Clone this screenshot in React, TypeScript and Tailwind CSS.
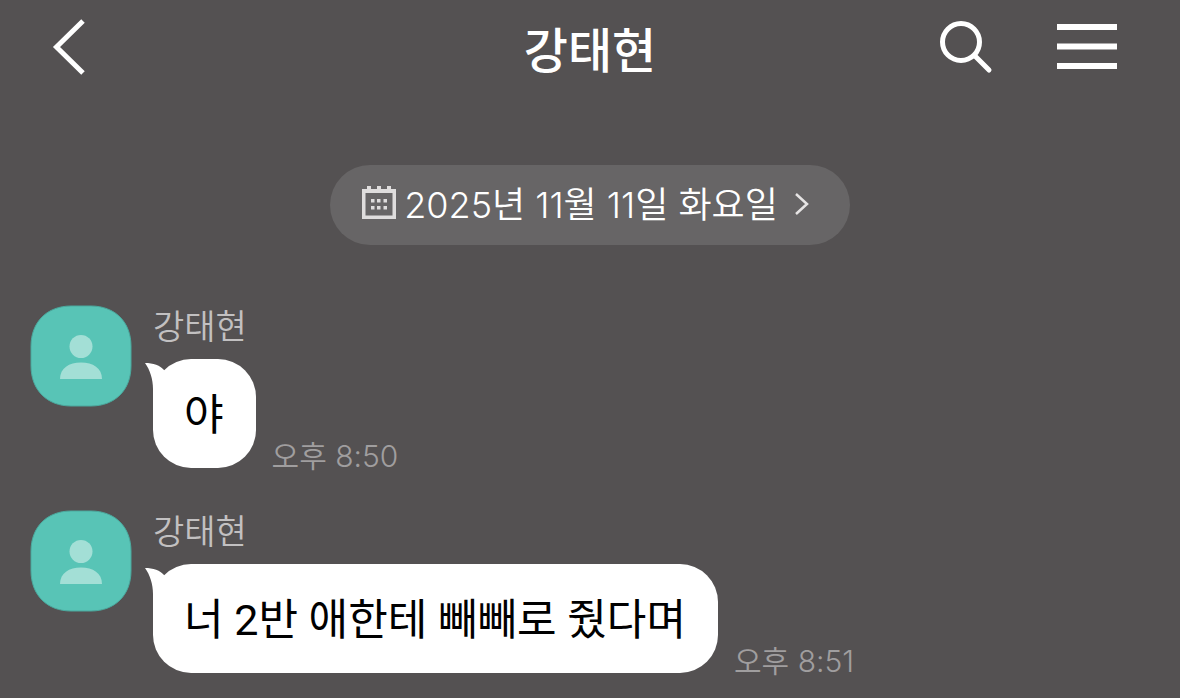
interface Message {
  id: number;
  sender: string;
  text: string;
  time: string;
}

const messages: Message[] = [
  { id: 1, sender: '강태현', text: '야', time: '오후 8:50' },
  { id: 2, sender: '강태현', text: '너 2반 애한테 빼빼로 줬다며', time: '오후 8:51' },
];

const ChatHeader = () => {
  return (
    <header className="grid grid-cols-[1fr_auto_1fr] items-center h-[94px] px-[52px]">
      <button type="button" aria-label="뒤로" className="justify-self-start">
        <svg width="34" height="56" viewBox="0 0 34 56" fill="none" stroke="#fff" strokeWidth="5">
          <path d="M31 2 L4.5 28 L31 54" />
        </svg>
      </button>

      <h1 className="pt-2 text-5xl font-medium text-white">강태현</h1>

      <div className="flex items-center justify-self-end gap-16 pr-[11px]">
        <button type="button" aria-label="검색">
          <svg width="54" height="54" viewBox="0 0 54 54" fill="none" stroke="#fff">
            <circle cx="22" cy="22" r="18.5" strokeWidth="5" />
            <path d="M35.5 35.5 L50 50" strokeWidth="5" strokeLinecap="round" />
          </svg>
        </button>
        <button type="button" aria-label="메뉴">
          <svg width="60" height="46" viewBox="0 0 60 46" fill="#fff">
            <rect y="0" width="60" height="6" />
            <rect y="19.5" width="60" height="6" />
            <rect y="39" width="60" height="6" />
          </svg>
        </button>
      </div>
    </header>
  );
};

const CalendarIcon = () => (
  <svg className="mb-1" width="34" height="34" viewBox="0 0 34 34" fill="#dfdddd" aria-hidden="true">
    <path fillRule="evenodd" d="M0 3H34V33H0Z M3.5 7V29.5H30.5V7Z" />
    <path d="M5 0H9V4H5Z M15 0H19V4H15Z M25 0H29V4H25Z" />
    <path d="M9 13H12.5V16.5H9Z M15 13H18.5V16.5H15Z M21.5 13H25V16.5H21.5Z" />
    <path d="M9 20H12.5V23.5H9Z M15 20H18.5V23.5H15Z M21.5 20H25V23.5H21.5Z" />
  </svg>
);

const DateDivider = () => {
  return (
    <div className="flex justify-center mt-[71px]">
      <button
        type="button"
        className="flex items-center h-20 pl-8 pr-10 rounded-full bg-[#676566] text-4xl font-[360] text-white"
      >
        <CalendarIcon />
        <span className="ml-2">2025년 11월 11일 화요일</span>
        <svg className="ml-4" width="16" height="24" viewBox="0 0 16 24" fill="none" stroke="#e6e4e4" strokeWidth="2.5" aria-hidden="true">
          <path d="M2 1 L13 11 L2 21" />
        </svg>
      </button>
    </div>
  );
};

const Avatar = () => (
  <svg className="shrink-0" width="102" height="102" viewBox="0 0 102 102" aria-hidden="true">
    <path
      d="M41 1 H61 C85 1 101 17 101 41 V61 C101 85 85 101 61 101 H41 C17 101 1 85 1 61 V41 C1 17 17 1 41 1Z"
      fill="#58c4b6"
      stroke="#4ba99e"
      strokeWidth="1"
    />
    <circle cx="51" cy="41.5" r="11.5" fill="#a3dfd6" />
    <path d="M30 74 C30 63 39 57.5 51 57.5 C63 57.5 72 63 72 74Z" fill="#a3dfd6" />
  </svg>
);

const MessageRow = ({ message }: { message: Message }) => {
  return (
    <li className="flex items-start gap-[21px]">
      <Avatar />
      <div className="min-w-0">
        <p className="h-[54px] text-[34px] leading-[44px] font-[360] text-[#c2c0c1]">{message.sender}</p>
        <div className="flex items-end gap-4">
          <div className="relative min-w-[102px] pl-[31px] pr-8 pt-[26px] pb-[22px] rounded-[38px] bg-white text-black">
            {/* bubble tail */}
            <svg className="absolute -left-2 top-1" width="30" height="40" viewBox="0 0 30 40" fill="#fff" aria-hidden="true">
              <path d="M0 0 C8 0 15 2 20 8 L30 20 L24 38 H8 V26 C8 16 5 7 0 0Z" />
            </svg>
            <p className="relative font-[Roboto,'Noto_Sans_CJK_KR',sans-serif] text-[43px] leading-[61px] break-keep">
              {message.text}
            </p>
          </div>
          <time className="shrink-0 text-3xl leading-6 font-[360] text-[#a09e9f]">{message.time}</time>
        </div>
      </div>
    </li>
  );
};

const App = () => {
  return (
    <main className="min-h-screen bg-[#545152] font-[Inter,'Noto_Sans_CJK_KR',sans-serif]">
      <ChatHeader />
      <DateDivider />
      <ul className="flex flex-col gap-[42px] mt-[60px] px-[30px] pb-6">
        {messages.map((message) => (
          <MessageRow key={message.id} message={message} />
        ))}
      </ul>
    </main>
  );
};

export default App;
